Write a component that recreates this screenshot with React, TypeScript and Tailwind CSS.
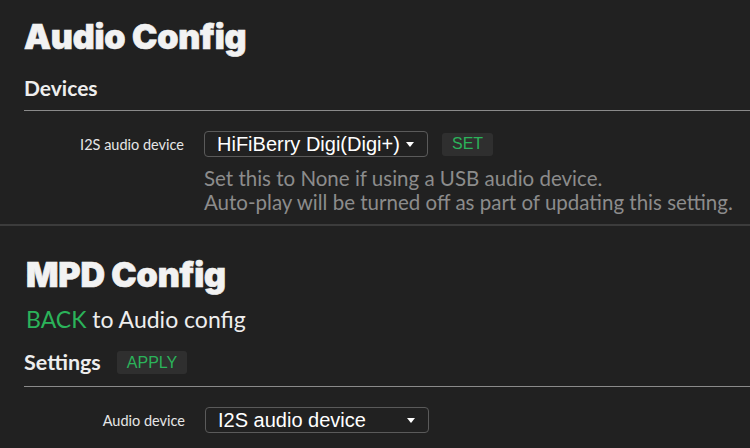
const body = { fontFamily: "Lato, 'Noto Sans', sans-serif" };

function Caret() {
  return (
    <svg width="8" height="5" viewBox="0 0 8 5" className="shrink-0">
      <path d="M0 0h8L4 5z" fill="#ffffff" />
    </svg>
  );
}

function Select({ value }: { value: string }) {
  return (
    <div className="flex h-[26px] w-[224px] items-center justify-between rounded-[4px] border border-[#5a5a5a] pl-[12px] pr-[13px] font-['Liberation_Sans',Arial,sans-serif] text-[20px] text-white">
      <span>{value}</span>
      <Caret />
    </div>
  );
}

function GreenButton({ children }: { children: string }) {
  return (
    <button className="flex h-[23px] items-center rounded-[3px] bg-[#2f2f2f] px-[10px] font-['Liberation_Sans',Arial,sans-serif] text-[16px] text-[#2bb35a]">
      {children}
    </button>
  );
}

function Title({ children }: { children: string }) {
  return (
    <h1 className="font-['Inter',sans-serif] text-[34px] font-black leading-[40px] tracking-[-0.2px] text-[#f2f2f2] [-webkit-text-stroke:0.7px_#f2f2f2]">
      {children}
    </h1>
  );
}

export default function App() {
  return (
    <div className="h-[448px] w-[750px] overflow-hidden bg-[#212121] text-[#eeeeee]" style={body}>
      <section className="pl-[24px] pt-[17px]">
        <Title>Audio Config</Title>
        <div className="mt-[18px] border-b border-[#8a8a8a] pb-[10px]">
          <h2 className="text-[21px] font-bold leading-[25px]">Devices</h2>
        </div>
        <div className="mt-[20px] flex">
          <div className="w-[160px] pt-[3px] text-right text-[14.5px] text-[#e6e6e6]">I2S audio device</div>
          <div className="ml-[20px] flex flex-col">
            <div className="flex items-center gap-[14px]">
              <Select value="HiFiBerry Digi(Digi+)" />
              <GreenButton>SET</GreenButton>
            </div>
            <p className="mt-[9px] text-[20.5px] leading-[24px] text-[#8c8c8c]">
              Set this to None if using a USB audio device.
              <br />
              Auto-play will be turned off as part of updating this setting.
            </p>
          </div>
        </div>
      </section>

      <div className="mt-[10px] h-[2px] w-full bg-[#3c3c3c]" />

      <section className="pl-[24px] pt-[29px]">
        <div className="pl-[2px]">
          <Title>MPD Config</Title>
        </div>
        <p className="mt-[10px] pl-[2px] text-[23px] leading-[28px]">
          <span className="text-[#2bb35a]">BACK</span> to Audio config
        </p>
        <div className="mt-[17px] flex items-center gap-[16px] border-b border-[#8a8a8a] pb-[11px]">
          <h2 className="text-[21.5px] font-bold leading-[25px]">Settings</h2>
          <GreenButton>APPLY</GreenButton>
        </div>
        <div className="mt-[20px] flex">
          <div className="w-[161px] pt-[3px] text-right text-[14.5px] text-[#e6e6e6]">Audio device</div>
          <div className="ml-[20px]">
            <Select value="I2S audio device" />
          </div>
        </div>
      </section>
    </div>
  );
}
